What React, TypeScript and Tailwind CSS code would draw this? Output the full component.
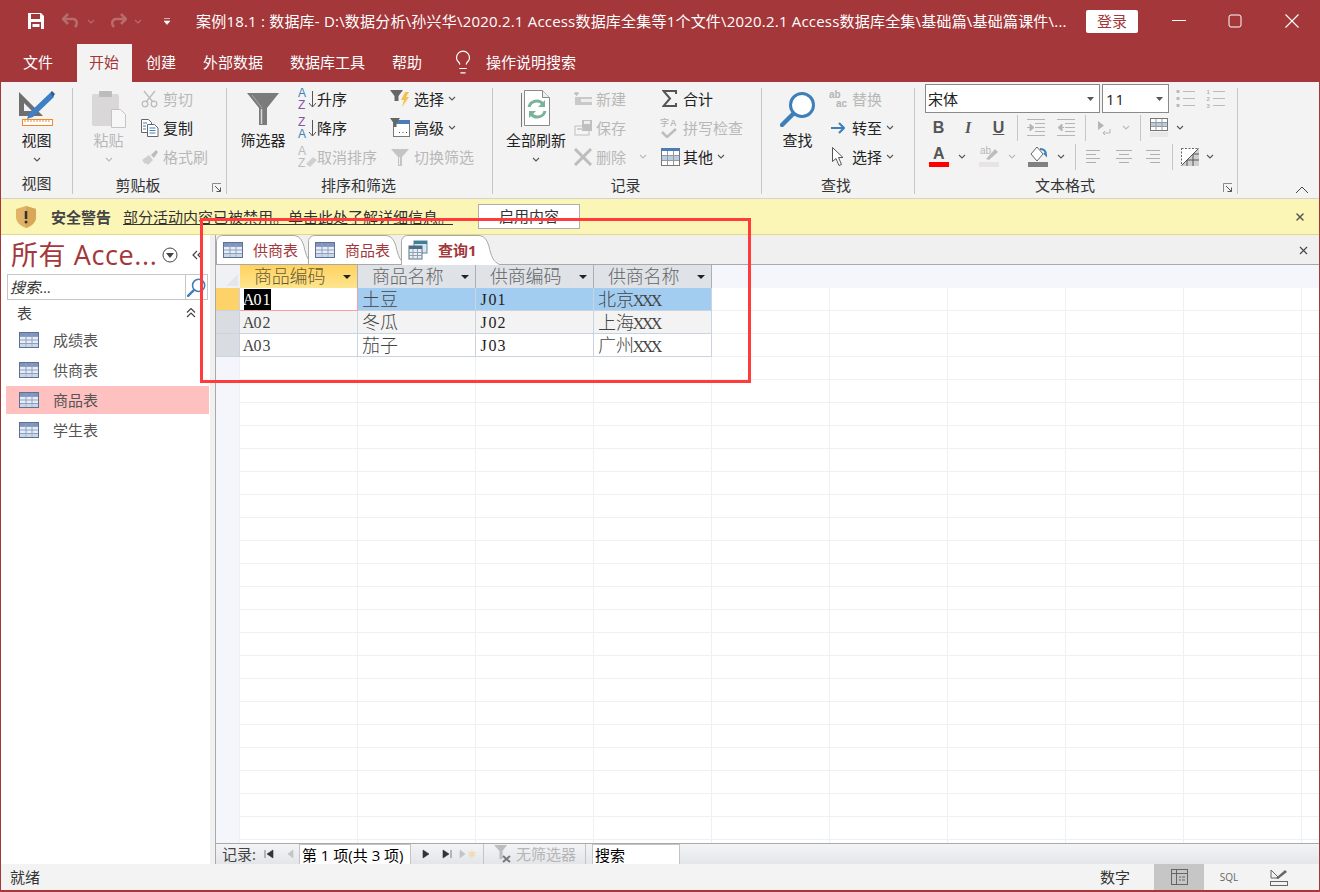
import type { ReactNode } from "react";
import { Lightbulb, X } from "lucide-react";

const Caret = ({ color = "#555", className = "" }: { color?: string; className?: string }) => (
  <svg width="8" height="5" viewBox="0 0 8 5" className={className}>
    <path d="M1 1l3 3 3-3" fill="none" stroke={color} strokeWidth="1.1" />
  </svg>
);

const TableIcon = () => (
  <svg width="20" height="16" viewBox="0 0 20 16">
    <rect x="0.5" y="0.5" width="19" height="15" fill="#e8eef8" stroke="#5d7196" />
    <rect x="1" y="1" width="18" height="3" fill="#7f95bd" />
    <path d="M7 1v14M13 1v14M1 4.5h18M1 8h18M1 11.5h18" stroke="#8ea0bd" strokeWidth="1" />
    <rect x="1" y="12" width="18" height="3" fill="#b8c6dc" opacity="0.6" />
  </svg>
);

const QueryIcon = () => (
  <svg width="20" height="20" viewBox="0 0 20 20">
    <rect x="6" y="1" width="13" height="12" fill="#d8e6ee" stroke="#5f8a9c" />
    <rect x="6" y="1" width="13" height="3" fill="#3f7f95" />
    <rect x="1" y="6" width="13" height="13" fill="#e8eef2" stroke="#5d7186" />
    <rect x="1" y="6" width="13" height="3" fill="#4a6d88" />
    <path d="M5 9v10M9.500 9v10M1 12.500h13M1 15.500h13" stroke="#8ea0b0" />
  </svg>
);

const Launcher = () => (
  <svg width="10" height="10" viewBox="0 0 10 10">
    <path d="M.5 9V.5H9" fill="none" stroke="#8a8a8a" />
    <path d="M3 3l5.500 5.500M8.500 4.500v4h-4" fill="none" stroke="#555" />
  </svg>
);

const ViewIcon = () => (
  <svg width="36" height="37" viewBox="19 91 36 37">
    <path d="M19 93l24 24H19z M24 104v8h8z" fill="#6f6f6f" fillRule="evenodd" />
    <path d="M29 114l21-20 4 4-21 20-6 2z" fill="#3f7fc4" />
    <path d="M50 94l2-2 3 3-2 3z" fill="#2f5f96" />
    <rect x="22.500" y="120.500" width="30" height="6" fill="#fff" stroke="#ed8b2e" />
    <path d="M25 121v2M28 121v2M31 121v2M34 121v2M37 121v2M40 121v2M43 121v2M46 121v2M49 121v2" stroke="#ed8b2e" />
  </svg>
);

const PasteIcon = () => (
  <svg width="36" height="38" viewBox="94 90 36 38">
    <rect x="95" y="94" width="27" height="32" rx="2" fill="#dad7d9" />
    <rect x="102" y="91" width="13" height="6" rx="1" fill="#bdbbbc" />
    <path d="M114.500 109.500h9l5 5v13h-14z" fill="#f7f7f7" stroke="#c4c4c4" />
  </svg>
);

const FunnelBig = () => (
  <svg width="34" height="34" viewBox="0 0 34 34">
    <path d="M1 1h32L21 16v17h-8V16z" fill="#7b7b7b" />
    <path d="M15.500 17v15" stroke="#d8d8d8" strokeWidth="1.500" />
    <path d="M6 3l10 13" stroke="#a8a8a8" strokeWidth="1" />
  </svg>
);

const RefreshDoc = () => (
  <svg width="30" height="37" viewBox="0 0 30 37">
    <path d="M.5 3v34" stroke="#777" />
    <path d="M3.500 .5h18l7 7v28h-25z" fill="#fff" stroke="#8a8a8a" />
    <path d="M21.500 .5v7h7" fill="#eee" stroke="#8a8a8a" />
    <path d="M8 17a8 8 0 0 1 14-3" fill="none" stroke="#79b39b" strokeWidth="3" />
    <path d="M24 21a8 8 0 0 1-14 3" fill="none" stroke="#79b39b" strokeWidth="3" />
    <path d="M24 10v7h-7zM8 28v-7h7z" fill="#79b39b" />
  </svg>
);

const Magnifier = ({ size = 36 }: { size?: number }) => (
  <svg width={size} height={size} viewBox="0 0 36 36">
    <circle cx="22" cy="14" r="11.500" fill="#fff" stroke="#3f7fb9" strokeWidth="3" />
    <path d="M13 23L2 34" stroke="#3f7fb9" strokeWidth="4.500" strokeLinecap="round" />
  </svg>
);

const Scissors = () => (
  <svg width="18" height="18" viewBox="0 0 18 18" fill="none" stroke="#bcbcbc" strokeWidth="1.300">
    <circle cx="4" cy="14" r="2.800" />
    <circle cx="13" cy="14" r="2.800" />
    <path d="M5.500 11.500L14 1M11.500 11.500L3 1" />
  </svg>
);

const Copy = () => (
  <svg width="18" height="18" viewBox="0 0 18 18">
    <path d="M.5 .5h7l3 3v10h-10z" fill="#fff" stroke="#666" />
    <path d="M6.500 5.500h7l3.500 3.500v8.500h-10.500z" fill="#fff" stroke="#666" />
    <path d="M2 4h4M2 7h3M2 10h3M8.500 9h6M8.500 11.500h6M8.500 14h6" stroke="#3f7fb9" />
  </svg>
);

const Painter = () => (
  <svg width="18" height="16" viewBox="0 0 18 16">
    <path d="M1 11l7-5 4 5-5 5-2-2-1 1z" fill="#cfcfcf" />
    <path d="M10 6l5-5 2 2-4 6z" fill="#bcbcbc" />
  </svg>
);

const SortIcon = ({ top, bottom, topColor, bottomColor, arrow = true }: { top: string; bottom: string; topColor: string; bottomColor: string; arrow?: boolean }) => (
  <div className="relative w-[20px] h-[26px] flex flex-col items-start justify-center font-['Liberation_Sans',sans-serif] text-[12px] leading-[12px] pl-[1px]">
    <span className={topColor}>{top}</span>
    <span className={bottomColor}>{bottom}</span>
    {arrow ? (
      <svg width="9" height="18" viewBox="0 0 9 18" className="absolute left-[11px] top-[5px]">
        <path d="M4.500 0v16M1 12l3.500 4 3.500-4" fill="none" stroke="#555" />
      </svg>
    ) : (
      <svg width="12" height="12" viewBox="0 0 12 12" className="absolute left-[9px] top-[12px]">
        <path d="M0 8l7-7 4 3-7 7z" fill="#d0d0d0" />
      </svg>
    )}
  </div>
);

const FilterBolt = () => (
  <svg width="20" height="19" viewBox="0 0 20 19">
    <path d="M0 1h13L8.500 7v5h-4V7z" fill="#666" />
    <path d="M15 3h4l-3 5h3l-7 10 2-7h-3z" fill="#f3c14f" />
  </svg>
);

const FilterAdvanced = () => (
  <svg width="20" height="19" viewBox="0 0 20 19">
    <rect x="3.500" y="2.500" width="16" height="16" fill="#fff" stroke="#777" />
    <rect x="3" y="2" width="17" height="4" fill="#4a7cb5" />
    <path d="M0 0h10L6.500 5v4h-3V5z" fill="#666" />
    <path d="M9 14.500h1M12.500 14.500h1M16 14.500h1" stroke="#444" />
  </svg>
);

const FilterToggle = () => (
  <svg width="18" height="18" viewBox="0 0 18 18">
    <path d="M0 1h18L11 9v9H7V9z" fill="#c4c4c4" />
    <path d="M8.500 9v8" stroke="#ececec" />
  </svg>
);

const NewRec = () => (
  <svg width="18" height="14" viewBox="0 0 18 14">
    <rect x="1" y="5" width="17" height="8" fill="#c9c9c9" />
    <rect x="7" y="7" width="11" height="3" fill="#eee" />
    <path d="M1 0l3 3M4 0L1 3M0 1.500h5M2.500 0v4" stroke="#c4c4c4" />
  </svg>
);

const SaveRec = () => (
  <svg width="18" height="16" viewBox="0 0 18 16">
    <rect x="1" y="6" width="14" height="9" fill="#f5f5f5" stroke="#bfbfbf" />
    <rect x="8" y="0" width="10" height="11" fill="#bfbfbf" />
    <rect x="10" y="1" width="6" height="3" fill="#eee" />
    <rect x="3" y="8" width="6" height="2" fill="#cfcfcf" />
  </svg>
);

const SpellIcon = () => (
  <div className="relative w-[20px] h-[20px] text-[9px] leading-[10px] text-[#bdbdbd] font-bold">
    <span className="absolute left-0 top-0">字</span>
    <span className="absolute left-[10px] top-0 font-['Liberation_Sans',sans-serif]">A</span>
    <svg width="16" height="10" viewBox="0 0 16 10" className="absolute left-[1px] top-[10px]">
      <path d="M1 4l5 5 9-8" fill="none" stroke="#bdbdbd" strokeWidth="2.500" />
    </svg>
  </div>
);

const MoreTable = () => (
  <svg width="19" height="18" viewBox="0 0 19 18">
    <rect x=".5" y=".5" width="18" height="17" fill="#fff" stroke="#777" />
    <rect x="0" y="0" width="19" height="3" fill="#4a7cb5" />
    <rect x="1" y="8" width="17" height="4" fill="#b7cde4" />
    <path d="M6.500 3v14M12.500 3v14M1 7.500h17M1 12.500h17" stroke="#999" />
  </svg>
);

const Cursor = () => (
  <svg width="12" height="19" viewBox="0 0 12 19">
    <path d="M.5 .5v14l3.500-3 3 7 2.500-1-3-7H11z" fill="#fff" stroke="#555" />
  </svg>
);

const ListIcon = ({ numbered }: { numbered?: boolean }) => (
  <svg width="20" height="20" viewBox="0 0 20 20">
    {numbered ? (
      <text x="0" y="0" fontSize="6" fontWeight="bold" fill="#b5b5b5" fontFamily="Liberation Sans">
        <tspan x="0.5" y="5">1</tspan>
        <tspan x="0.5" y="12">2</tspan>
        <tspan x="0.5" y="19">3</tspan>
      </text>
    ) : (
      <path d="M0.500 2.500h3M0.500 9.500h3M0.500 16.500h3" stroke="#bbb" strokeWidth="3" />
    )}
    <path d="M7 2.500h12M7 9.500h12M7 16.500h12" stroke="#bbb" />
  </svg>
);

const IndentIcon = ({ dir }: { dir: "in" | "out" }) => (
  <svg width="18" height="17" viewBox="0 0 18 17">
    <path d="M0 .5h18M8 4.500h10M8 8.500h10M8 12.500h10M0 16.500h18" stroke="#b5b5b5" />
    {dir === "in" ? <path d="M0 8.500h5M3 5l4 3.500-4 3.500z" fill="#b5b5b5" stroke="#b5b5b5" /> : <path d="M2 8.500h5M5 5L1 8.500 5 12z" fill="#b5b5b5" stroke="#b5b5b5" />}
  </svg>
);

const AlignIcon = ({ kind }: { kind: "l" | "c" | "r" }) => {
  const d = kind === "l" ? "M0 .5h14M0 4.500h10M0 8.500h14M0 12.500h10" : kind === "c" ? "M0 .5h16M3 4.500h10M0 8.500h16M3 12.500h10" : "M0 .5h14M4 4.500h10M0 8.500h14M4 12.500h10";
  return (
    <svg width="16" height="13" viewBox="0 0 16 13">
      <path d={d} stroke="#b0b0b0" />
    </svg>
  );
};

const GridFont = () => (
  <svg width="18" height="19" viewBox="0 0 18 19">
    <rect x=".5" y=".5" width="17" height="12" fill="#fff" stroke="#777" />
    <rect x="1" y="5" width="16" height="3" fill="#b7cde4" />
    <path d="M6 1v11M12 1v11M1 4.500h16M1 8.500h16" stroke="#999" />
    <rect x="0" y="14" width="18" height="5" fill="#e8e8e8" />
  </svg>
);

const FontColor = () => (
  <div className="relative w-[20px] h-[21px]">
    <span className="absolute left-[4px] -top-[1px] text-[16px] leading-[18px] font-bold text-[#555] font-['Liberation_Sans',sans-serif]">A</span>
    <div className="absolute left-0 bottom-0 w-[20px] h-[5px] bg-[#ff0000]" />
  </div>
);

const Highlight = () => (
  <div className="relative w-[20px] h-[21px]">
    <span className="absolute left-[1px] -top-[1px] text-[10px] leading-[12px] text-[#b8b8b8] font-['Liberation_Sans',sans-serif]">ab</span>
    <svg width="14" height="14" viewBox="0 0 14 14" className="absolute left-[6px] top-[1px]">
      <path d="M1 12L10 2l3 3-9 8z" fill="#bdbdbd" />
    </svg>
    <div className="absolute left-0 bottom-0 w-[20px] h-[5px] bg-[#e8e4e6]" />
  </div>
);

const FillBucket = () => (
  <svg width="20" height="21" viewBox="0 0 20 21">
    <path d="M9 1l6 7-6 7-6-7z" fill="#fff" stroke="#666" />
    <path d="M12 3c4 0 6 2 6 6l-2-2" fill="none" stroke="#3f7fb9" strokeWidth="2" />
    <rect x="0" y="16" width="20" height="5" fill="#808080" />
  </svg>
);

const BorderGrid = () => (
  <svg width="18" height="18" viewBox="0 0 18 18">
    <path d="M.5 .5h17v17H.5z" fill="#fff" stroke="#666" strokeDasharray="2 1.500" />
    <path d="M0 18L18 0v18z" fill="#cfcfcf" />
    <path d="M.5 17.500L17.500 .5M6 12v6M12 6v12M6 12h12M12 6h6" stroke="#555" />
  </svg>
);

const Sep = () => <div className="w-px self-center h-[106px] bg-[#c6c6c6] shrink-0" />;
const MiniSep = ({ className = "" }: { className?: string }) => <div className={"w-px h-[26px] bg-[#c6c6c6] shrink-0 " + className} />;

const Group = ({ label, width, labelClass = "", launcher, children }: { label: string; width: string; labelClass?: string; launcher?: boolean; children: ReactNode }) => (
  <div className={"relative flex flex-col shrink-0 " + width}>
    <div className="flex h-[87px]">{children}</div>
    <div className={"h-[30px] flex items-center justify-center text-[15px] leading-[20px] text-[#333] " + labelClass}>{label}</div>
    {launcher && (
      <div className="absolute right-[4px] top-[99px]">
        <Launcher />
      </div>
    )}
  </div>
);

const BigBtn = ({ icon, label, caret, disabled, className }: { icon: ReactNode; label: string; caret?: boolean; disabled?: boolean; className: string }) => (
  <div className={"flex flex-col items-center shrink-0 " + className}>
    <div className="h-[46px] flex items-center justify-center pt-[3px]">{icon}</div>
    <div className={"h-[20px] text-[15px] leading-[20px] whitespace-nowrap " + (disabled ? "text-[#b8b8b8]" : "text-[#222]")}>{label}</div>
    {caret && (
      <div className="h-[18px] flex items-center">
        <Caret color={disabled ? "#bbb" : "#555"} />
      </div>
    )}
  </div>
);

const SmallBtn = ({ icon, label, disabled, caret, gap = "ml-[3px]" }: { icon: ReactNode; label: string; disabled?: boolean; caret?: boolean; gap?: string }) => (
  <div className="h-[29px] flex items-center whitespace-nowrap">
    <div className="w-[20px] flex justify-center items-center shrink-0">{icon}</div>
    <span className={gap + " text-[15px] leading-[20px] " + (disabled ? "text-[#b8b8b8]" : "text-[#222]")}>{label}</span>
    {caret && <Caret className="ml-[4px]" />}
  </div>
);

const Ribbon = () => (
  <div className="flex h-[117px] bg-[#f3f3f3] pt-[2px] border-b border-[#d2d2d2]">
    <Group label="视图" width="w-[71px]">
      <BigBtn icon={<ViewIcon />} label="视图" caret className="w-[71px]" />
    </Group>
    <Sep />
    <Group label="剪贴板" width="w-[153px]" labelClass="pr-[23px]" launcher>
      <BigBtn icon={<PasteIcon />} label="粘贴" caret disabled className="ml-[4px] w-[63px]" />
      <div className="flex flex-col">
        <SmallBtn icon={<Scissors />} label="剪切" disabled />
        <SmallBtn icon={<Copy />} label="复制" />
        <SmallBtn icon={<Painter />} label="格式刷" disabled />
      </div>
    </Group>
    <Sep />
    <Group label="排序和筛选" width="w-[265px]" labelClass="pr-[2px]">
      <BigBtn icon={<FunnelBig />} label="筛选器" className="ml-[2px] w-[68px]" />
      <div className="flex flex-col w-[93px]">
        <SmallBtn icon={<SortIcon top="A" bottom="Z" topColor="text-[#3f7fb9]" bottomColor="text-[#8652a8]" />} label="升序" gap="ml-0" />
        <SmallBtn icon={<SortIcon top="Z" bottom="A" topColor="text-[#8652a8]" bottomColor="text-[#3f7fb9]" />} label="降序" gap="ml-0" />
        <SmallBtn icon={<SortIcon top="A" bottom="Z" topColor="text-[#bbb]" bottomColor="text-[#bbb]" arrow={false} />} label="取消排序" disabled gap="ml-0" />
      </div>
      <div className="flex flex-col">
        <SmallBtn icon={<FilterBolt />} label="选择" caret gap="ml-[4px]" />
        <SmallBtn icon={<FilterAdvanced />} label="高级" caret gap="ml-[4px]" />
        <SmallBtn icon={<FilterToggle />} label="切换筛选" disabled gap="ml-[4px]" />
      </div>
    </Group>
    <Sep />
    <Group label="记录" width="w-[268px]" labelClass="pr-[3px]">
      <BigBtn icon={<RefreshDoc />} label="全部刷新" caret className="ml-[6px] w-[74px]" />
      <div className="flex flex-col w-[87px]">
        <SmallBtn icon={<NewRec />} label="新建" disabled />
        <SmallBtn icon={<SaveRec />} label="保存" disabled />
        <div className="flex items-center">
          <SmallBtn
            icon={
              <svg width="20" height="18" viewBox="0 0 20 18">
                <path d="M2 1l16 16M18 1L2 17" stroke="#bdbdbd" strokeWidth="3" />
              </svg>
            }
            label="删除"
            disabled
          />
          <Caret color="#bbb" className="ml-[13px]" />
        </div>
      </div>
      <div className="flex flex-col">
        <SmallBtn
          icon={
            <svg width="16" height="17" viewBox="0 0 16 17">
              <path d="M14 4V1H1.500l6.500 7.500L1.500 16H14v-3" fill="none" stroke="#555" strokeWidth="2" />
            </svg>
          }
          label="合计"
          gap="ml-[3px]"
        />
        <SmallBtn icon={<SpellIcon />} label="拼写检查" disabled gap="ml-[3px]" />
        <SmallBtn icon={<MoreTable />} label="其他" caret gap="ml-[3px]" />
      </div>
    </Group>
    <Sep />
    <Group label="查找" width="w-[152px]" labelClass="pr-[4px]">
      <BigBtn icon={<Magnifier />} label="查找" className="ml-[5px] w-[61px]" />
      <div className="flex flex-col">
        <SmallBtn
          icon={
            <div className="text-[10px] leading-[9px] font-['Liberation_Sans',sans-serif] font-bold text-[#b5b5b5]">
              ab
              <br />
              <span className="ml-[7px]">ac</span>
            </div>
          }
          label="替换"
          disabled
          gap="ml-[4px]"
        />
        <SmallBtn
          icon={
            <svg width="14" height="12" viewBox="0 0 14 12">
              <path d="M0 6h12M8 1l5 5-5 5" fill="none" stroke="#3f7fb9" strokeWidth="2" />
            </svg>
          }
          label="转至"
          caret
          gap="ml-[4px]"
        />
        <SmallBtn icon={<Cursor />} label="选择" caret gap="ml-[4px]" />
      </div>
    </Group>
    <Sep />
    <Group label="文本格式" width="w-[322px]" labelClass="pr-[22px]" launcher>
      <div className="flex flex-col pl-[10px]">
        <div className="h-[29px] flex items-center">
          <div className="w-[175px] h-[29px] bg-white border border-[#8a8a8a] flex items-center justify-between px-[2px] pr-[5px]">
            <span className="text-[15px] leading-[20px] text-[#222]">宋体</span>
            <svg width="7" height="4" viewBox="0 0 7 4">
              <path d="M0 0h7L3.500 4z" fill="#555" />
            </svg>
          </div>
          <div className="ml-[2px] w-[67px] h-[29px] bg-white border border-[#8a8a8a] flex items-center justify-between px-[3px] pr-[5px]">
            <span className="text-[15px] leading-[20px] tracking-[1px] text-[#222] font-['Open_Sans',sans-serif]">11</span>
            <svg width="7" height="4" viewBox="0 0 7 4">
              <path d="M0 0h7L3.500 4z" fill="#555" />
            </svg>
          </div>
          <div className="ml-[7px]">
            <ListIcon />
          </div>
          <div className="ml-[10px]">
            <ListIcon numbered />
          </div>
        </div>
        <div className="h-[29px] flex items-center font-['Liberation_Sans',sans-serif] text-[16px] text-[#555]">
          <span className="w-[27px] text-center font-bold">B</span>
          <span className="w-[32px] text-center italic font-bold font-['Liberation_Serif',serif]">I</span>
          <span className="w-[29px] text-center font-bold underline">U</span>
          <MiniSep className="ml-[4px]" />
          <div className="ml-[9px]">
            <IndentIcon dir="in" />
          </div>
          <div className="ml-[12px]">
            <IndentIcon dir="out" />
          </div>
          <MiniSep className="ml-[10px]" />
          <svg width="14" height="16" viewBox="0 0 14 16" className="ml-[11px]">
            <path d="M1 1l6 4.500L1 10z" fill="#b5b5b5" />
            <path d="M13 9v4H6M8 11l-2 2 2 2" fill="none" stroke="#b5b5b5" />
          </svg>
          <Caret color="#bbb" className="ml-[11px]" />
          <MiniSep className="ml-[10px]" />
          <div className="ml-[9px]">
            <GridFont />
          </div>
          <Caret className="ml-[8px]" />
        </div>
        <div className="h-[29px] flex items-center">
          <div className="ml-[4px]">
            <FontColor />
          </div>
          <Caret className="ml-[9px]" />
          <div className="ml-[13px]">
            <Highlight />
          </div>
          <Caret color="#bbb" className="ml-[9px]" />
          <div className="ml-[12px]">
            <FillBucket />
          </div>
          <Caret className="ml-[9px]" />
          <MiniSep className="ml-[10px]" />
          <div className="ml-[10px]">
            <AlignIcon kind="l" />
          </div>
          <div className="ml-[14px]">
            <AlignIcon kind="c" />
          </div>
          <div className="ml-[14px]">
            <AlignIcon kind="r" />
          </div>
          <MiniSep className="ml-[10px]" />
          <div className="ml-[8px]">
            <BorderGrid />
          </div>
          <Caret className="ml-[7px]" />
        </div>
      </div>
    </Group>
    <Sep />
    <div className="flex-1 flex items-end justify-end pr-[10px] pb-[4px]">
      <svg width="14" height="8" viewBox="0 0 14 8">
        <path d="M1 7l6-6 6 6" fill="none" stroke="#444" />
      </svg>
    </div>
  </div>
);

const MenuTab = ({ label, active }: { label: string; active?: boolean }) => (
  <div className={"flex items-center text-[15px] leading-[20px] whitespace-nowrap " + (active ? "bg-[#f3f3f3] text-[#a4373a] mt-[2px] h-[38px] pb-[2px] pl-[12px] pr-[13px]" : "h-[40px] text-white")}>{label}</div>
);

const TitleBar = () => (
  <div className="h-[42px] flex items-center text-white relative">
    <svg width="16" height="16" viewBox="0 0 16 16" className="ml-[28px] shrink-0">
      <path d="M0 0h13l3 3v13H0z" fill="#fff" />
      <rect x="3" y="1" width="9" height="5" fill="#a4373a" />
      <rect x="3" y="9" width="10" height="7" fill="#a4373a" />
      <rect x="4.500" y="11" width="7" height="3" fill="#fff" />
    </svg>
    <svg width="18" height="16" viewBox="0 0 18 16" className="ml-[18px] shrink-0">
      <path d="M6 1L1 6l5 5M1 6h10c4 0 5 5 2 8" fill="none" stroke="#b86c6e" strokeWidth="2.500" />
    </svg>
    <Caret color="#b86c6e" className="ml-[7px]" />
    <svg width="18" height="16" viewBox="0 0 18 16" className="ml-[14px] shrink-0">
      <path d="M12 1l5 5-5 5M17 6H7c-4 0-5 5-2 8" fill="none" stroke="#b86c6e" strokeWidth="2.500" />
    </svg>
    <Caret color="#b86c6e" className="ml-[7px]" />
    <svg width="6" height="7" viewBox="0 0 6 7" className="ml-[22px]">
      <path d="M0 .5h6M0 3h6L3 6.500z" fill="#fff" stroke="#fff" strokeWidth=".6" />
    </svg>
    <div className="ml-[26px] w-[874px] text-[15px] leading-[20px] tracking-[0.2px] whitespace-nowrap overflow-hidden">案例18.1 : 数据库- D:\数据分析\孙兴华\2020.2.1 Access数据库全集等1个文件\2020.2.1 Access数据库全集\基础篇\基础篇课件\...</div>
    <div className="ml-[16px] w-[52px] h-[23px] bg-white rounded-[2px] text-[#a4373a] text-[15px] leading-[23px] text-center">登录</div>
    <div className="flex-1 flex justify-end items-center">
      <div className="w-[57px] flex justify-center">
        <svg width="14" height="14" viewBox="0 0 14 14">
          <path d="M0 6.500h14" stroke="#fff" />
        </svg>
      </div>
      <div className="w-[56px] flex justify-center">
        <svg width="14" height="14" viewBox="0 0 14 14">
          <rect x="1" y="1" width="12" height="12" rx="2" fill="none" stroke="#fff" />
        </svg>
      </div>
      <div className="w-[57px] flex justify-center">
        <svg width="14" height="14" viewBox="0 0 14 14">
          <path d="M.5 .5l13 13M13.500 .5l-13 13" stroke="#fff" strokeWidth="1.100" />
        </svg>
      </div>
    </div>
  </div>
);

const MenuBar = () => (
  <div className="h-[40px] flex items-start">
    <div className="flex items-start pl-[23px]">
      <MenuTab label="文件" />
      <div className="ml-[24px]">
        <MenuTab label="开始" active />
      </div>
      <div className="ml-[14px]">
        <MenuTab label="创建" />
      </div>
      <div className="ml-[27px]">
        <MenuTab label="外部数据" />
      </div>
      <div className="ml-[27px]">
        <MenuTab label="数据库工具" />
      </div>
      <div className="ml-[27px]">
        <MenuTab label="帮助" />
      </div>
      <div className="ml-[28px] h-[40px] flex items-center">
        <Lightbulb size={26} color="#fff" strokeWidth={1.100} />
      </div>
      <div className="ml-[10px]">
        <MenuTab label="操作说明搜索" />
      </div>
    </div>
  </div>
);

const MessageBar = () => (
  <div className="h-[36px] bg-[#fcf6b6] border-b border-[#e0d98a] flex items-center text-[15px] leading-[20px]">
    <svg width="20" height="22" viewBox="0 0 20 22" className="ml-[15px] shrink-0">
      <path d="M10 0l10 3v8c0 6-5 9-10 11C5 20 0 17 0 11V3z" fill="#e0b368" />
      <path d="M10 0l10 3v8c0 6-5 9-10 11z" fill="#d8a758" />
      <path d="M10 5v8" stroke="#333" strokeWidth="2.500" />
      <circle cx="10" cy="16" r="1.500" fill="#333" />
    </svg>
    <span className="ml-[15px] font-bold text-[#444]">安全警告</span>
    <span className="ml-[12px] text-[#333] underline">部分活动内容已被禁用。单击此处了解详细信息。</span>
    <div className="ml-[25px] w-[102px] h-[25px] bg-white border border-[#aeaeae] text-center leading-[23px] text-[#333]">启用内容</div>
    <div className="flex-1 flex justify-end pr-[13px]">
      <X size={12} color="#555" strokeWidth={3} />
    </div>
  </div>
);

const navItems = ["成绩表", "供商表", "商品表", "学生表"];

const NavPane = () => (
  <div className="w-[209px] shrink-0 bg-white flex flex-col">
    <div className="h-[39px] flex items-center pl-[10px]">
      <span className="text-[27px] leading-[36px] tracking-[0.6px] text-[#a4373a] whitespace-nowrap">所有 Acce...</span>
      <svg width="16" height="16" viewBox="0 0 16 16" className="ml-[5px] shrink-0">
        <circle cx="8" cy="8" r="7" fill="#fff" stroke="#444" />
        <path d="M4 6h8l-4 5z" fill="#444" />
      </svg>
      <svg width="11" height="10" viewBox="0 0 11 10" className="ml-[14px] shrink-0">
        <path d="M5 1L1 5l4 4M10 1L6 5l4 4" fill="none" stroke="#444" strokeWidth="1.200" />
      </svg>
    </div>
    <div className="ml-[6px] w-[201px] h-[26px] border border-[#c6c6c6] flex">
      <div className="flex-1 pl-[2px] text-[15px] leading-[24px] italic text-[#333]">搜索...</div>
      <div className="w-[22px] border-l border-[#c6c6c6] flex items-center justify-center">
        <Magnifier size={19} />
      </div>
    </div>
    <div className="h-[25px] flex items-center justify-between pl-[16px] pr-[14px] text-[15px] leading-[20px] text-[#444]">
      <span>表</span>
      <svg width="10" height="10" viewBox="0 0 10 10">
        <path d="M1 4.500l4-4 4 4M1 9l4-4 4 4" fill="none" stroke="#444" strokeWidth="1.200" />
      </svg>
    </div>
    <div className="flex flex-col">
      {navItems.map((name) => (
        <div key={name} className="h-[30px] flex items-center">
          <div className={"ml-[5px] w-[203px] h-[28px] flex items-center " + (name === "商品表" ? "bg-[#ffc0c0]" : "")}>
            <div className="ml-[13px]">
              <TableIcon />
            </div>
            <span className="ml-[14px] text-[15px] leading-[20px] text-[#555]">{name}</span>
          </div>
        </div>
      ))}
    </div>
  </div>
);

const TabShape = ({ active }: { active?: boolean }) => (
  <svg width="108" height="30" viewBox="0 0 108 30" className="absolute left-0 top-0">
    <path d="M.5 30V7C.5 3 3 .5 7 .5h70c6 0 9 4 11 11 2 9 4 16 12 18.500" fill="#fff" stroke="#a8a8a8" />
    {!active && <path d="M0 29.500h100" stroke="#a9a9a9" />}
  </svg>
);

const DocTab = ({ label, active, query, width }: { label: string; active?: boolean; query?: boolean; width: string }) => (
  <div className={"relative h-[30px] shrink-0 " + width}>
    <TabShape active={active} />
    <div className="relative flex items-center h-[30px] pl-[7px]">
      {query ? <QueryIcon /> : <TableIcon />}
      <span className={"ml-[10px] text-[15px] leading-[20px] text-[#a4373a] whitespace-nowrap " + (active ? "font-bold" : "")}>{label}</span>
    </div>
  </div>
);

// half-width latin like the SimSun datasheet font: every letter sits in a 9px box
const SimLatin = ({ text }: { text: string }) => (
  <span className="font-['Liberation_Serif',serif] text-[16px]">
    {text.split("").map((c, i) => (
      <span key={i} className="inline-flex justify-center w-[9px]">
        {c}
      </span>
    ))}
  </span>
);

const SimText = ({ cjk, latin }: { cjk?: string; latin?: string }) => (
  <span className="whitespace-nowrap">
    {cjk && <span className="text-[18px] font-light">{cjk}</span>}
    {latin && <SimLatin text={latin} />}
  </span>
);

const headers = ["商品编码", "商品名称", "供商编码", "供商名称"];

const rows = [
  { code: "A01", name: "土豆", sup: "J01", cjk: "北京" },
  { code: "A02", name: "冬瓜", sup: "J02", cjk: "上海" },
  { code: "A03", name: "茄子", sup: "J03", cjk: "广州" },
];

const Datasheet = () => (
  <div className="flex-1 min-h-0 bg-white bg-[linear-gradient(to_right,#eff0f4_1px,transparent_1px),linear-gradient(to_bottom,#eff0f4_1px,transparent_1px)] bg-[size:118px_23px] bg-[position:23px_-1px] relative overflow-hidden">
    <div className="flex h-[23px] bg-[#f5f6fc]">
      <div className="w-[24px] shrink-0 bg-[#f0f1f5] flex items-end justify-end pr-[2px] pb-[2px]">
        <svg width="12" height="12" viewBox="0 0 12 12">
          <path d="M12 0v12H0z" fill="#e4e6ec" />
        </svg>
      </div>
      {headers.map((h, i) => (
        <div key={h} className={"w-[118px] shrink-0 border-r border-[#a9b0ba] flex items-center justify-between pl-[14px] pr-[5px] " + (i === 0 ? "bg-linear-to-b from-[#ffd25f] to-[#fde58d] text-[#6a5a30]" : "bg-[#dfe2e6] text-[#666]")}>
          <span className="text-[18px] leading-[23px] font-light tracking-[-0.2px] whitespace-nowrap">{h}</span>
          <div className="w-[11px] h-[10px] flex items-center justify-center">
            <svg width="8" height="4" viewBox="0 0 8 4">
              <path d="M0 0h8L4 4z" fill="#222" />
            </svg>
          </div>
        </div>
      ))}
    </div>
    {rows.map((r, i) => (
      <div key={r.code} className={"flex h-[23px] w-[496px] " + (i === 1 ? "bg-[#f3f3f3]" : i === 0 ? "bg-[#a3cdf0]" : "bg-white")}>
        <div className={"w-[24px] shrink-0 border-r border-b border-[#cbd3e0] " + (i === 0 ? "bg-[#fdd268]" : "bg-[#d9dde1]")} />
        <div className={"w-[118px] shrink-0 pl-[4px] pt-[1px] leading-[21px] " + (i === 0 ? "bg-white border-r border-b border-[#f4a0a4]" : "border-r border-b border-[#cbd3e0] text-[#444]")}>
          {i === 0 ? (
            <span className="inline-block bg-black text-white leading-[21px]">
              <SimLatin text={r.code} />
            </span>
          ) : (
            <SimText latin={r.code} />
          )}
        </div>
        <div className="w-[118px] shrink-0 pl-[4px] pt-[1px] leading-[21px] border-r border-b border-[#cbd3e0] text-[#444]">
          <SimText cjk={r.name} />
        </div>
        <div className="w-[118px] shrink-0 pl-[3px] pt-[1px] leading-[21px] border-r border-b border-[#cbd3e0] text-[#222]">
          <SimText latin={r.sup} />
        </div>
        <div className="w-[118px] shrink-0 pl-[4px] pt-[1px] leading-[21px] border-r border-b border-[#cbd3e0] text-[#444]">
          <SimText cjk={r.cjk} latin="XXX" />
        </div>
      </div>
    ))}
    <div className="absolute left-0 top-[92px] bottom-0 w-[24px] bg-[#f5f6fc] border-r border-[#eff0f4]" />
  </div>
);

const NavArrow = ({ d, disabled }: { d: string; disabled?: boolean }) => (
  <svg width="10" height="10" viewBox="0 0 10 10" className="shrink-0">
    <path d={d} fill={disabled ? "#c4c4c4" : "#333"} stroke={disabled ? "#c4c4c4" : "#333"} strokeWidth=".6" />
  </svg>
);

const RecordNav = () => (
  <div className="h-[21px] shrink-0 border-t border-[#a9a9a9] flex items-end bg-linear-to-b from-[#f3f4f6] to-[#e4e5e9] text-[15px] leading-[20px]">
    <span className="ml-[6px] h-[20px] text-[#444]">记录:</span>
    <div className="ml-[8px] flex items-center h-[20px]">
      <NavArrow d="M1 1v8M9 1v8L3 5z" />
    </div>
    <div className="ml-[12px] flex items-center h-[20px]">
      <NavArrow d="M7 1v8L2 5z" disabled />
    </div>
    <div className="ml-[3px] w-[112px] h-[20px] bg-white border-x border-t border-[#c4c4c4] text-black pl-[2px] whitespace-nowrap overflow-hidden">第 1 项(共 3 项)</div>
    <div className="ml-[10px] flex items-center h-[20px]">
      <NavArrow d="M2 1v8l6-4z" />
    </div>
    <div className="ml-[11px] flex items-center h-[20px]">
      <NavArrow d="M1 1v8l6-4zM9 1v8" />
    </div>
    <div className="ml-[6px] flex items-center h-[20px]">
      <NavArrow d="M2 1v8l5-4z" disabled />
      <span className="text-[10px] leading-[10px] text-[#f0dcb0]">✱</span>
    </div>
    <div className="ml-[7px] w-px h-[20px] bg-[#c4c4c4]" />
    <div className="ml-[10px] h-[20px] flex items-center">
      <svg width="18" height="18" viewBox="0 0 18 18">
        <path d="M0 0h13L8.500 6v8h-3V6z" fill="#bdbdbd" />
        <path d="M9 11l7 6M16 11l-7 6" stroke="#777" strokeWidth="2" />
      </svg>
    </div>
    <span className="ml-[4px] h-[20px] text-[#b5b5b5]">无筛选器</span>
    <div className="ml-[9px] w-px h-[20px] bg-[#c4c4c4]" />
    <div className="ml-[6px] w-[88px] h-[20px] bg-white border-x border-t border-[#c4c4c4] text-black pl-[2px]">搜索</div>
  </div>
);

const StatusBar = () => (
  <div className="h-[26px] flex items-center bg-[#f3f3f3] text-[15px] leading-[20px] text-[#333]">
    <span className="ml-[9px]">就绪</span>
    <span className="ml-auto">数字</span>
    <div className="ml-[24px] w-[50px] h-[26px] bg-[#c6c6c6] flex items-center justify-center">
      <svg width="17" height="16" viewBox="0 0 17 16">
        <rect x=".5" y=".5" width="16" height="15" fill="none" stroke="#666" />
        <path d="M.5 4.500h16M5.500 .5v15M8 8h2M11 8h3M8 11h2M11 11h3" stroke="#666" />
      </svg>
    </div>
    <div className="w-[50px] h-[26px] flex items-center justify-center font-['Open_Sans',sans-serif] text-[10px] text-[#666]">SQL</div>
    <div className="w-[50px] h-[26px] flex items-center justify-center">
      <svg width="18" height="17" viewBox="0 0 18 17">
        <path d="M1 1l8 8H1z" fill="none" stroke="#666" />
        <path d="M6 9l9-8 2 2-9 7z" fill="#666" />
        <rect x=".5" y="12.500" width="17" height="4" fill="none" stroke="#666" />
      </svg>
    </div>
    <div className="w-[15px]" />
  </div>
);

const App = () => (
  <div className="relative w-[1320px] h-[892px] overflow-hidden bg-[#a4373a] font-['Open_Sans','Noto_Sans_CJK_SC',sans-serif] flex flex-col">
    <TitleBar />
    <MenuBar />
    <div className="flex-1 min-h-0 mx-[1px] mb-[2px] flex flex-col">
      <Ribbon />
      <MessageBar />
      <div className="flex-1 min-h-0 flex bg-[#f0f0f0]">
        <NavPane />
        <div className="w-[6px] shrink-0 bg-[#f0f0f0] border-r border-[#a9a9a9]" />
        <div className="flex-1 min-w-0 flex flex-col">
          <div className="h-[30px] shrink-0 bg-[#f0f0f0] border-b border-[#a9a9a9] flex items-start">
            <DocTab label="供商表" width="w-[92px]" />
            <DocTab label="商品表" width="w-[93px]" />
            <DocTab label="查询1" active query width="w-[100px]" />
            <div className="flex-1 flex justify-end pr-[9px] pt-[9px]">
              <X size={13} color="#444" strokeWidth={2} />
            </div>
          </div>
          <Datasheet />
          <RecordNav />
        </div>
      </div>
      <StatusBar />
    </div>
    <div className="absolute left-[200px] top-[218px] w-[551px] h-[165px] border-[3px] border-[#ff3b3b]" />
  </div>
);

export default App;
